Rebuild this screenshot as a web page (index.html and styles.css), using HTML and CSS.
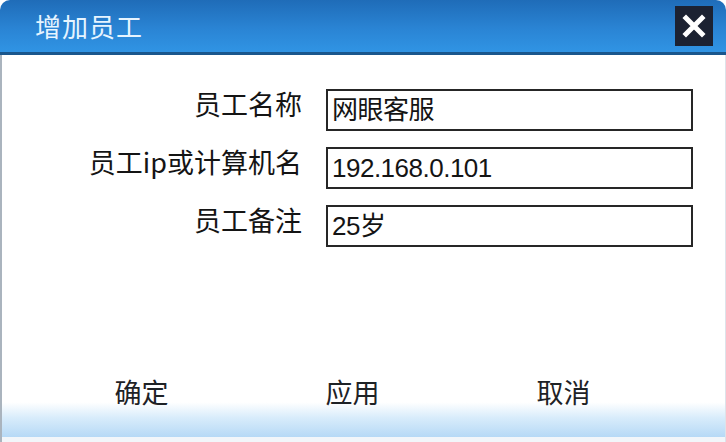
FILE: index.html
```html
<!DOCTYPE html>
<html lang="zh-CN">
<head>
<meta charset="utf-8">
<title>增加员工</title>
<link rel="stylesheet" href="styles.css">
</head>
<body>
<div class="dialog">
  <div class="titlebar">
    <span class="title">增加员工</span>
    <span class="close" aria-label="关闭">
      <svg width="24" height="24" viewBox="0 0 24 24"><path d="M4 4 L20 20 M20 4 L4 20" stroke="#ffffff" stroke-width="5" stroke-linecap="square" fill="none"/></svg>
    </span>
  </div>
  <div class="main">
    <div class="form">
      <label class="label">员工名称</label>
      <div class="field">网眼客服</div>
      <label class="label">员工ip或计算机名</label>
      <div class="field">192.168.0.101</div>
      <label class="label">员工备注</label>
      <div class="field">25岁</div>
    </div>
    <div class="footer">
      <span class="btn">确定</span>
      <span class="btn">应用</span>
      <span class="btn">取消</span>
    </div>
    <div class="bottom"></div>
  </div>
</div>
</body>
</html>
```

FILE: styles.css
```css
html, body {
  margin: 0;
  padding: 0;
  background: #ffffff;
}
body {
  font-family: "Noto Sans CJK SC", "Liberation Sans", sans-serif;
  color: #151515;
}
.dialog {
  width: 726px;
  height: 442px;
  display: flex;
  flex-direction: column;
  overflow: hidden;
}
.titlebar {
  height: 52px;
  flex: 0 0 auto;
  border-bottom: 3px solid #1a568c;
  border-radius: 10px 10px 0 0;
  background: linear-gradient(to bottom, #1f6cb8 0%, #2a84d4 55%, #3094e4 100%);
  display: flex;
  align-items: center;
  justify-content: space-between;
  padding: 0 13px 0 35px;
}
.title {
  color: #e6f4ff;
  font-size: 26px;
  line-height: 30px;
  letter-spacing: 1px;
}
.close {
  width: 38px;
  height: 40px;
  background: #1c2232;
  display: flex;
  align-items: center;
  justify-content: center;
}
.main {
  flex: 1;
  display: flex;
  flex-direction: column;
  border-left: 2px solid #aab4be;
  border-right: 1px solid #dde3ea;
}
.form {
  padding-top: 34px;
  display: grid;
  grid-template-columns: 300px 367px;
  grid-auto-rows: 42px;
  column-gap: 24px;
  row-gap: 16px;
}
.label {
  text-align: right;
  font-size: 27px;
  line-height: 30px;
  white-space: nowrap;
  color: #141414;
}
.field {
  box-sizing: border-box;
  height: 42px;
  border: 2px solid #262626;
  padding-left: 4px;
  font-family: "Liberation Sans", "Noto Sans CJK SC", sans-serif;
  font-size: 26px;
  line-height: 38px;
  color: #141414;
  background: #ffffff;
  letter-spacing: -0.5px;
}
.footer {
  margin-top: auto;
  height: 77px;
  box-sizing: border-box;
  padding: 17px 0 0 34px;
  display: flex;
  background: linear-gradient(to bottom, #ffffff 0%, #ffffff 55%, #d8ecfb 75%, #b6d9f6 100%);
}
.btn {
  width: 211px;
  text-align: center;
  font-size: 27px;
  line-height: 30px;
  color: #1e2226;
}
.bottom {
  height: 5px;
  background: #f2f6fa;
}
```
